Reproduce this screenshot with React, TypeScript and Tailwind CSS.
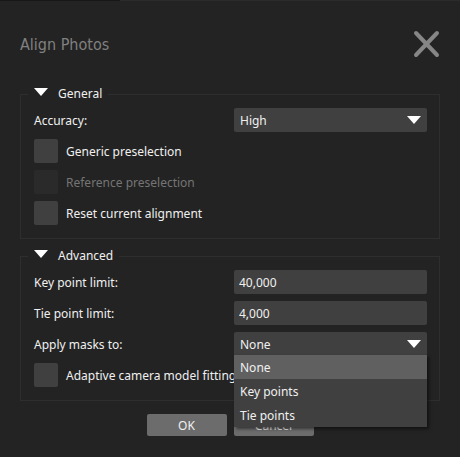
import { useState, type ReactNode } from "react";

function Triangle() {
  return (
    <svg width="14" height="8" viewBox="0 0 14 8" fill="#ffffff" aria-hidden="true">
      <path d="M0 0h14L7 8z" />
    </svg>
  );
}

function Group({ title, children }: { title: string; children: ReactNode }) {
  const [open, setOpen] = useState(true);
  return (
    <fieldset className="min-w-0 border border-[#2e2e2e] pr-3 pb-[13px] pl-[13px]">
      <legend className="-ml-1.5 h-5 px-1.5 text-[#f0f0f0]">
        <button
          type="button"
          aria-expanded={open}
          onClick={() => setOpen(!open)}
          className="flex h-5 items-center gap-2.5"
        >
          <span className="pb-1">
            <Triangle />
          </span>
          {title}
        </button>
      </legend>
      {open && <div className="flex flex-col gap-[7px] pt-1">{children}</div>}
    </fieldset>
  );
}

function Field({ id, label, children }: { id: string; label: string; children: ReactNode }) {
  return (
    <div className="flex h-6 items-center">
      <label htmlFor={id} className="w-[200px] shrink-0 pt-0.5">
        {label}
      </label>
      <div className="relative h-6 min-w-0 flex-1">{children}</div>
    </div>
  );
}

function Check({ label, disabled = false }: { label: string; disabled?: boolean }) {
  return (
    <label
      className={
        disabled
          ? "flex h-6 items-center gap-2 whitespace-nowrap text-[#757575]"
          : "flex h-6 items-center gap-2 whitespace-nowrap"
      }
    >
      <input
        type="checkbox"
        disabled={disabled}
        className="size-6 shrink-0 appearance-none rounded-xs bg-[#404040] checked:bg-[#808080] disabled:bg-[#2a2a2a]"
      />
      <span className="pt-0.5">{label}</span>
    </label>
  );
}

function Select({
  id,
  value,
  options,
  onChange,
}: {
  id: string;
  value: string;
  options: string[];
  onChange: (value: string) => void;
}) {
  return (
    <>
      <select
        id={id}
        value={value}
        onChange={(e) => onChange(e.target.value)}
        className="h-6 w-full appearance-none rounded-xs bg-[#404040] pt-0.5 pl-1.5"
      >
        {options.map((o) => (
          <option key={o}>{o}</option>
        ))}
      </select>
      <span className="pointer-events-none absolute top-2 right-1.5">
        <Triangle />
      </span>
    </>
  );
}

const maskTargets = ["None", "Key points", "Tie points"];

export default function App() {
  const [accuracy, setAccuracy] = useState("High");
  const [mask, setMask] = useState("None");
  const [menuOpen, setMenuOpen] = useState(true);

  return (
    <main className="min-h-screen bg-[#232323] font-['Noto_Sans',sans-serif] text-[12px] leading-5 text-[#f0f0f0]">
      <div className="flex h-px bg-[#2b2b2b]">
        <div className="w-[120px] bg-[#171717]" />
      </div>
      <form className="px-5 pb-5" onSubmit={(e) => e.preventDefault()}>
        <header className="flex h-[83px] items-center justify-between">
          <h1 className="pt-1 font-['DejaVu_Sans_Condensed','DejaVu_Sans',sans-serif] text-[16px] leading-6 text-[#808080]">
            Align Photos
          </h1>
          <button type="button" aria-label="Close" className="pt-[3px]">
            <svg width="28" height="28" viewBox="0 0 28 28" stroke="#868686" strokeWidth="4" strokeLinecap="round">
              <path d="M4 3l21 22M25 3L4 25" />
            </svg>
          </button>
        </header>

        <div className="flex flex-col gap-[7px]">
          <Group title="General">
            <Field id="accuracy" label="Accuracy:">
              <Select
                id="accuracy"
                value={accuracy}
                options={["Highest", "High", "Medium", "Low", "Lowest"]}
                onChange={setAccuracy}
              />
            </Field>
            <Check label="Generic preselection" />
            <Check label="Reference preselection" disabled />
            <Check label="Reset current alignment" />
          </Group>

          <Group title="Advanced">
            <Field id="key-limit" label="Key point limit:">
              <input
                id="key-limit"
                defaultValue="40,000"
                className="h-6 w-full rounded-xs bg-[#404040] px-[5px]"
              />
            </Field>
            <Field id="tie-limit" label="Tie point limit:">
              <input
                id="tie-limit"
                defaultValue="4,000"
                className="h-6 w-full rounded-xs bg-[#404040] px-[5px]"
              />
            </Field>
            <Field id="masks" label="Apply masks to:">
              <Select id="masks" value={mask} options={maskTargets} onChange={setMask} />
              {menuOpen && (
                <ul
                  role="listbox"
                  aria-label="Apply masks to"
                  className="absolute inset-x-0 top-[23px] z-10 bg-[#404040] shadow-[2px_2px_3px_rgba(0,0,0,0.5)]"
                >
                  {maskTargets.map((o) => (
                    <li
                      key={o}
                      role="option"
                      aria-selected={o === mask}
                      onClick={() => {
                        setMask(o);
                        setMenuOpen(false);
                      }}
                      className="flex h-6 items-center pt-0.5 pl-1.5 aria-selected:bg-[#606060]"
                    >
                      {o}
                    </li>
                  ))}
                </ul>
              )}
            </Field>
            <Check label="Adaptive camera model fitting" />
          </Group>
        </div>

        <div className="mt-[13px] flex justify-center gap-[7px]">
          <button type="submit" className="h-[22px] w-20 rounded-xs bg-[#6c6c6c] pt-0.5">
            OK
          </button>
          <button type="button" className="h-[22px] w-20 rounded-xs bg-[#6c6c6c] pt-0.5">
            Cancel
          </button>
        </div>
      </form>
    </main>
  );
}
